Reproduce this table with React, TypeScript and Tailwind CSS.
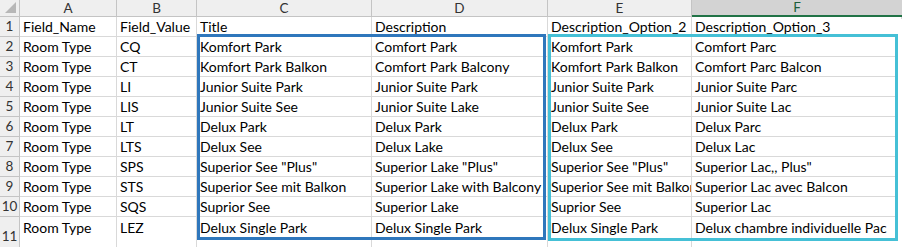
const rows: string[][] = [
  ["Field_Name", "Field_Value", "Title", "Description", "Description_Option_2", "Description_Option_3"],
  ["Room Type", "CQ", "Komfort Park", "Comfort Park", "Komfort Park", "Comfort Parc"],
  ["Room Type", "CT", "Komfort Park Balkon", "Comfort Park Balcony", "Komfort Park Balkon", "Comfort Parc Balcon"],
  ["Room Type", "LI", "Junior Suite Park", "Junior Suite Park", "Junior Suite Park", "Junior Suite Parc"],
  ["Room Type", "LIS", "Junior Suite See", "Junior Suite Lake", "Junior Suite See", "Junior Suite Lac"],
  ["Room Type", "LT", "Delux Park", "Delux Park", "Delux Park", "Delux Parc"],
  ["Room Type", "LTS", "Delux See", "Delux Lake", "Delux See", "Delux Lac"],
  ["Room Type", "SPS", 'Superior See "Plus"', 'Superior Lake "Plus"', 'Superior See "Plus"', 'Superior Lac,, Plus"'],
  ["Room Type", "STS", "Superior See mit Balkon", "Superior Lake with Balcony", "Superior See mit Balkon", "Superior Lac avec Balcon"],
  ["Room Type", "SQS", "Suprior See", "Superior Lake", "Suprior See", "Superior Lac"],
  ["Room Type", "LEZ", "Delux Single Park", "Delux Single Park", "Delux Single Park", "Delux chambre individuelle Pac"],
];

const letters = ["A", "B", "C", "D", "E", "F"];

export default function App() {
  return (
    <div
      className="relative h-[247px] w-[902px] overflow-hidden bg-white text-[14px] text-black"
      style={{ fontFamily: "Lato, 'Liberation Sans', sans-serif" }}
    >
      <div className="grid grid-cols-[20px_97px_80px_175px_176px_144px_210px]">
        {/* corner */}
        <div className="relative h-[17px] border-b border-r border-[#c4c4c4] bg-[#efefef]">
          <div className="absolute bottom-[3px] right-[3px] h-0 w-0 border-b-[11px] border-l-[11px] border-b-[#b7b7b7] border-l-transparent" />
        </div>
        {letters.map((l) =>
          l === "F" ? (
            <div
              key={l}
              className="flex h-[17px] items-center justify-center border-b-2 border-[#217346] bg-[#d3d3d3] text-[13.5px] text-[#1d5e3a]"
            >
              {l}
            </div>
          ) : (
            <div
              key={l}
              className="flex h-[17px] items-center justify-center border-b border-r border-[#c4c4c4] bg-[#efefef] text-[13.5px] text-[#333]"
            >
              {l}
            </div>
          )
        )}
        {rows.map((r, i) => {
          const last = i === rows.length - 1;
          return [
            <div
              key={`h${i}`}
              className={`flex items-center justify-center border-b border-r border-[#c4c4c4] bg-[#efefef] text-[13.5px] text-[#333] ${last ? "h-[40px]" : "h-[20px]"}`}
            >
              {i + 1}
            </div>,
            ...r.map((c, j) => (
              <div
                key={`c${i}-${j}`}
                className={`overflow-hidden whitespace-nowrap border-b border-r border-[#d9d9d9] pl-[3px] leading-[20px] ${last ? "h-[40px] pt-[1px]" : "h-[20px]"}`}
              >
                {c}
              </div>
            )),
          ];
        })}
      </div>

      {/* annotation boxes */}
      <div className="absolute left-[197px] top-[34px] h-[206px] w-[349px] border-[3.5px] border-[#2f77bc]" />
      <div className="absolute left-[548px] top-[34px] h-[207px] w-[350px] border-[3.5px] border-[#45c0d6]" />
      <div className="absolute left-[898px] top-[19px] h-[228px] w-[4px] bg-white" />
    </div>
  );
}
